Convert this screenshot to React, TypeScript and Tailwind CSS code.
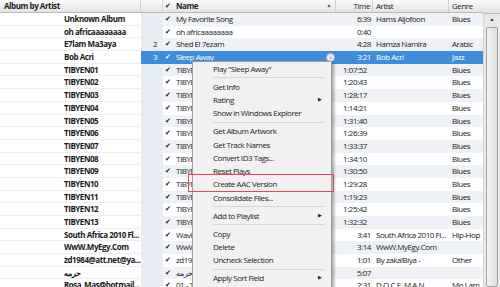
import React from 'react';

type Row = {
  album: string;
  no?: string;
  name: string;
  time: string;
  artist?: string;
  genre?: string;
  selected?: boolean;
};

const tibyen: [string, string][] = [
  ['01', '1:07:52'],
  ['02', '1:20:43'],
  ['03', '1:28:17'],
  ['04', '1:14:21'],
  ['05', '1:31:40'],
  ['06', '1:26:39'],
  ['07', '1:33:37'],
  ['08', '1:34:10'],
  ['09', '1:30:50'],
  ['10', '1:29:28'],
  ['11', '1:19:23'],
  ['12', '1:25:42'],
  ['13', '1:32:32'],
];

const rows: Row[] = [
  { album: 'Unknown Album', name: 'My Favorite Song', time: '6:39', artist: 'Hams Aljofoon', genre: 'Blues' },
  { album: 'oh africaaaaaaaa', name: 'oh africaaaaaaaa', time: '0:40' },
  { album: 'E7lam Ma3aya', no: '2', name: 'Shed El 7ezam', time: '4:28', artist: 'Hamza Namira', genre: 'Arabic' },
  { album: 'Bob Acri', no: '3', name: 'Sleep Away', time: '3:21', artist: 'Bob Acri', genre: 'Jazz', selected: true },
  ...tibyen.map(([n, t]) => ({ album: 'TIBYEN' + n, name: 'TIBYEN' + n, time: t, genre: 'Blues' })),
  { album: 'South Africa 2010 Fl...', name: 'Waving Flag', time: '3:41', artist: 'South Africa 2010 Fl...', genre: 'Hip-Hop' },
  { album: 'WwW.MyEgy.Com', name: 'WwW.MyEgy.Com', time: '3:14', artist: 'WwW.MyEgy.Com' },
  { album: 'zd1984@att.net@ya...', name: 'zd1984@att.net', time: '1:01', artist: 'By zaka!Biya -', genre: 'Other' },
  { album: 'حرمه', name: 'حرمه', time: '5:07' },
  { album: 'Rosa_Mas@hotmail...', name: '01 - Track', time: '2:31', artist: 'D.O.C.E. M.A.N.', genre: 'Mo Lam...' },
];

const cols = 'grid grid-cols-[141px_22px_11px_162px_37px_76px_34px]';

type MenuEntry = { label: string; sub?: boolean } | 'sep';

const menu: MenuEntry[] = [
  { label: 'Play "Sleep Away"' },
  'sep',
  { label: 'Get Info' },
  { label: 'Rating', sub: true },
  { label: 'Show in Windows Explorer' },
  'sep',
  { label: 'Get Album Artwork' },
  { label: 'Get Track Names' },
  { label: 'Convert ID3 Tags...' },
  { label: 'Reset Plays' },
  { label: 'Create AAC Version' },
  { label: 'Consolidate Files...' },
  'sep',
  { label: 'Add to Playlist', sub: true },
  'sep',
  { label: 'Copy' },
  { label: 'Delete' },
  { label: 'Uncheck Selection' },
  'sep',
  { label: 'Apply Sort Field', sub: true },
  { label: 'Show in Playlist', sub: true },
];

function Header() {
  return (
    <div className={`${cols} h-[14px] items-center border-b border-[#b9b9b9] bg-gradient-to-b from-[#fbfbfb] to-[#e3e3e3] text-[8px] tracking-[-0.45px] text-[#222]`}>
      <div className="h-full flex items-center pl-1 font-bold border-r border-[#d2d2d2]">Album by Artist</div>
      <div className="h-full border-r border-[#d2d2d2]" />
      <div className="h-full flex items-center pl-[2px] text-[7px]">✔</div>
      <div className="h-full flex items-center justify-between pl-[2px] pr-[4px] font-bold border-r border-[#d2d2d2]">
        <span>Name</span>
        <span className="text-[5px] text-[#555]">▲</span>
      </div>
      <div className="h-full flex items-center justify-end pr-[2px] border-r border-[#d2d2d2]">Time</div>
      <div className="h-full flex items-center pl-[3px] border-r border-[#d2d2d2]">Artist</div>
      <div className="h-full flex items-center pl-[3px]">Genre</div>
    </div>
  );
}

function TrackRow({ row, index }: { row: Row; index: number }) {
  const stripe = index % 2 === 0 ? 'bg-[#eef2f7]' : 'bg-white';
  const sel = row.selected;
  const cell = sel ? 'bg-[#3d8ddb] text-white' : `${stripe} text-[#1a1a1a]`;
  // h:mm:ss times sit a little further left than m:ss ones
  const timePad = row.time.length > 5 ? 'pr-[6px]' : 'pr-[2px]';
  return (
    <div className={`${cols} h-[12.7px] text-[8px] tracking-[-0.45px] leading-[12.7px] whitespace-nowrap`}>
      <div className="bg-white pl-[64px] font-bold text-[#1a1a1a] border-b border-[#eeeeee] overflow-hidden">{row.album}</div>
      <div className={`${sel ? cell : 'bg-[#e9edf3] text-[#1a1a1a]'} text-right pr-[6px]`}>{row.no}</div>
      <div className={`${cell} pl-[2px] text-[7px]`}>✔</div>
      <div className={`${cell} pl-[2px] overflow-hidden relative`}>
        {row.name}
        {sel && (
          <span className="absolute right-[1px] top-[2px] w-[9px] h-[9px] rounded-full bg-[#e8eef6] border border-[#9fb5cf] flex items-center justify-center text-[7px] leading-none text-[#4a6d96]">
            ›
          </span>
        )}
      </div>
      <div className={`${cell} text-right ${timePad}`}>{row.time}</div>
      <div className={`${cell} pl-[3px] overflow-hidden`}>{row.artist}</div>
      <div className={`${cell} pl-[3px] overflow-hidden`}>{row.genre}</div>
    </div>
  );
}

function Scrollbar() {
  return (
    <div className="w-[17px] flex flex-col">
      <div className="h-[14px] border-b border-[#b9b9b9] bg-gradient-to-b from-[#fbfbfb] to-[#e3e3e3]" />
      <div className="flex-1 flex flex-col bg-[#e8e8e8] border-l border-[#d6d6d6]">
        <div className="h-[12px] flex items-center justify-center text-[5px] text-[#333]">▲</div>
        <div className="flex-1 mx-[2px] mt-[1px] rounded-[2px] border border-[#a4a4a4] bg-gradient-to-r from-[#f4f4f4] to-[#dcdcdc]" />
      </div>
    </div>
  );
}

function ContextMenu() {
  return (
    <div className="absolute left-[192px] top-[61px] w-[140px] bg-[#f1f1f1] border border-[#9d9d9d] shadow-[2px_2px_3px_rgba(0,0,0,0.35)] text-[8px] tracking-[-0.45px] text-[#1e1e1e] pl-[20px] pr-[6px]">
      {menu.map((m, i) =>
        m === 'sep' ? (
          <div key={i} className="h-[4.7px] flex items-center">
            <div className="w-full h-px bg-[#d7d7d7]" />
          </div>
        ) : (
          <div key={i} className="h-[13.3px] flex items-center justify-between">
            <span>{m.label}</span>
            {m.sub && <span className="text-[5px] text-[#222] mr-[3px]">▶</span>}
          </div>
        ),
      )}
    </div>
  );
}

export default function App() {
  return (
    <div className="relative w-[500px] h-[287px] overflow-hidden bg-white font-['Open_Sans',sans-serif]">
      <div className="flex h-full">
        <div className="w-[483px] flex flex-col">
          <Header />
          {rows.map((r, i) => (
            <TrackRow key={i} row={r} index={i} />
          ))}
        </div>
        <Scrollbar />
      </div>
      <ContextMenu />
      <div className="absolute left-[188px] top-[174px] w-[146px] h-[18px] border border-[#dc4a55]" />
    </div>
  );
}
